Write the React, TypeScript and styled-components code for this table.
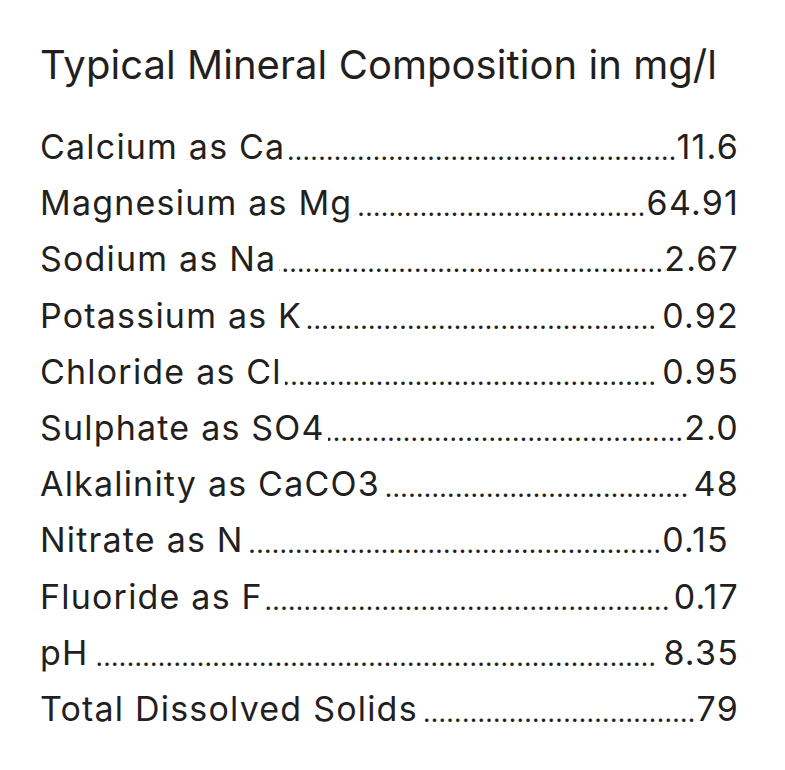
import React from "react";
import styled, { createGlobalStyle } from "styled-components";

const GlobalStyle = createGlobalStyle`
  html, body { margin: 0; padding: 0; background: #ffffff; }
  body { font-family: Inter, Lato, sans-serif; color: #231f20; }
`;

const Page = styled.main`
  width: 785px;
  height: 770px;
  box-sizing: border-box;
  padding: 40px 46px 0 40px;
  display: flex;
  flex-direction: column;
`;

const Title = styled.h1`
  margin: 0 0 29px 0;
  font-size: 40px;
  line-height: 50px;
  font-weight: 400;
  letter-spacing: 0.05px;
  white-space: nowrap;
`;

const List = styled.dl`
  margin: 0;
  display: flex;
  flex-direction: column;
`;

const Row = styled.div`
  display: flex;
  align-items: baseline;
  height: 56.2px;
  font-size: 34px;
  line-height: 56px;
  letter-spacing: 1.2px;
`;

const Label = styled.dt`
  margin: 0;
  white-space: nowrap;
`;

const DOTS = ".".repeat(120);

const Leader = styled.span<{ $before: number; $after: number }>`
  flex: 1 1 0;
  min-width: 0;
  align-self: stretch;
  display: flex;
  justify-content: flex-end;
  overflow: hidden;
  white-space: nowrap;
  margin: 0 ${(p) => p.$after}px 0 ${(p) => p.$before}px;
  font-size: 26px;
  letter-spacing: 0.3px;
  line-height: 56px;

  &::before {
    content: "${DOTS}";
    flex: none;
    transform: translateY(4px);
  }
`;

const Value = styled.dd<{ $trail: number }>`
  margin: 0 ${(p) => p.$trail}px 0 0;
  white-space: nowrap;
`;

const rows: { label: string; value: string; before: number; after: number; trail: number }[] = [
  { label: "Calcium as Ca", value: "11.6", before: 4, after: 0, trail: 0 },
  { label: "Magnesium as Mg", value: "64.91", before: 3, after: 1, trail: 0 },
  { label: "Sodium as Na", value: "2.67", before: 3, after: 1, trail: 0 },
  { label: "Potassium as K", value: "0.92", before: 3, after: 6, trail: 0 },
  { label: "Chloride as Cl", value: "0.95", before: 3, after: 6, trail: 0 },
  { label: "Sulphate as SO4", value: "2.0", before: 3, after: 1, trail: 0 },
  { label: "Alkalinity as CaCO3", value: "48", before: 3, after: 5, trail: 0 },
  { label: "Nitrate as N", value: "0.15", before: 3, after: 1, trail: 10 },
  { label: "Fluoride as F", value: "0.17", before: 3, after: 4, trail: 0 },
  { label: "pH", value: "8.35", before: 5, after: 7, trail: 0 },
  { label: "Total Dissolved Solids", value: "79", before: 3, after: 1, trail: 0 },
];

export default function App() {
  return (
    <>
      <GlobalStyle />
      <Page>
        <Title>Typical Mineral Composition in mg/l</Title>
        <List>
          {rows.map((r) => (
            <Row key={r.label}>
              <Label>{r.label}</Label>
              <Leader $before={r.before} $after={r.after} aria-hidden="true" />
              <Value $trail={r.trail}>{r.value}</Value>
            </Row>
          ))}
        </List>
      </Page>
    </>
  );
}
